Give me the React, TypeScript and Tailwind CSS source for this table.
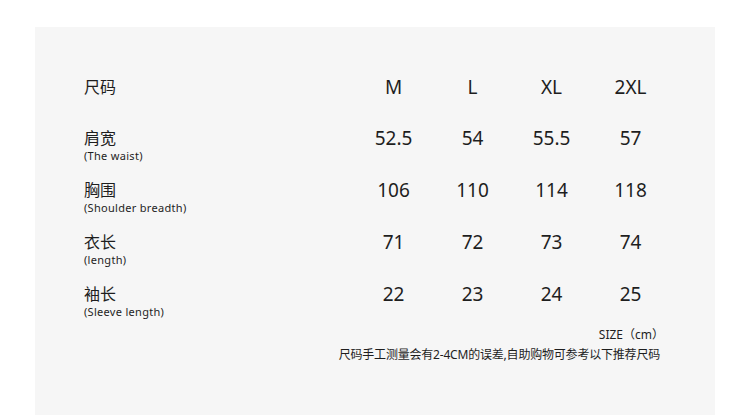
const sizes = ['M', 'L', 'XL', '2XL']

const rows = [
  { label: '肩宽', sub: '(The waist)', values: ['52.5', '54', '55.5', '57'] },
  { label: '胸围', sub: '(Shoulder breadth)', values: ['106', '110', '114', '118'] },
  { label: '衣长', sub: '(length)', values: ['71', '72', '73', '74'] },
  { label: '袖长', sub: '(Sleeve length)', values: ['22', '23', '24', '25'] },
]

export default function App() {
  return (
    <div
      className="w-[750px] h-[415px] bg-white overflow-hidden pt-[27px] pl-[35px] pr-[35px]"
      style={{ fontFamily: '"Noto Sans", "Noto Sans CJK SC", sans-serif' }}
    >
      <div className="h-[388px] bg-[#f6f6f6] pt-[50px] pl-[49px] text-[#1e1e1e]">
        {/* Header */}
        <div className="flex items-start mb-[31px]">
          <div className="w-[270px] text-[16px] leading-[20px]">尺码</div>
          {sizes.map(s => (
            <div key={s} className="w-[79px] text-center text-[19px] leading-[20px]">
              {s}
            </div>
          ))}
        </div>

        {/* Measurements */}
        <div className="flex flex-col gap-[17px]">
          {rows.map(r => (
            <div key={r.label} className="flex items-start">
              <div className="w-[270px]">
                <div className="text-[16px] leading-[21px]">{r.label}</div>
                <div className="text-[11px] leading-[14px] tracking-[0.3px]">{r.sub}</div>
              </div>
              {r.values.map((v, i) => (
                <div key={i} className="w-[79px] text-center text-[19px] leading-[20px]">
                  {v}
                </div>
              ))}
            </div>
          ))}
        </div>

        {/* Footnote */}
        <div className="mt-[6px] w-[576px] text-right text-[12px] leading-[20px]">
          <div className="mr-[-4px]">SIZE（cm）</div>
          <div className="tracking-[-0.2px]">尺码手工测量会有2-4CM的误差,自助购物可参考以下推荐尺码</div>
        </div>
      </div>
    </div>
  )
}
